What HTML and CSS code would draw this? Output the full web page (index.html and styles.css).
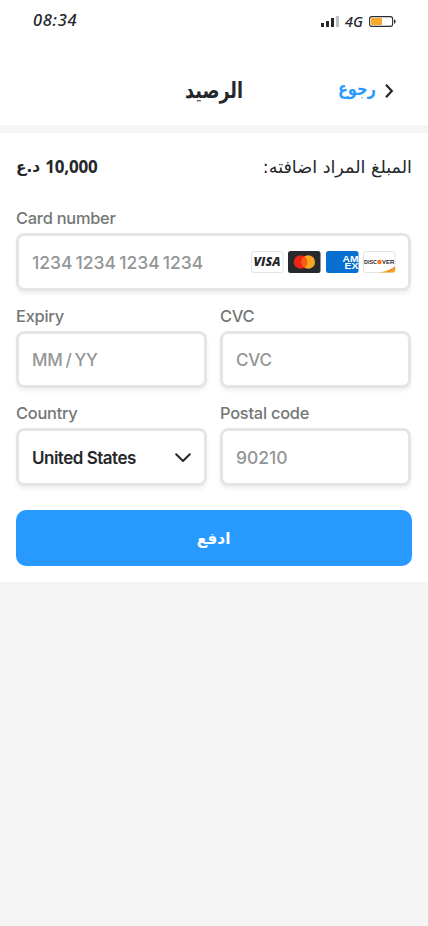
FILE: index.html
```html
<!DOCTYPE html>
<html lang="ar">
<head>
<meta charset="utf-8">
<meta name="viewport" content="width=device-width, initial-scale=1">
<title>الرصيد</title>
<link rel="stylesheet" href="styles.css">
</head>
<body>
<div class="status">
  <span class="time">08:34</span>
  <div class="indicators">
    <svg class="signal" width="18" height="11" viewBox="0 0 18 11"><path fill="#25272b" d="M0 7h3v4H0zM5 5h3v6H5zM10 2h3v9h-3z"/><path fill="#bfc2c5" d="M15 0h3v11h-3z"/></svg>
    <span class="network">4G</span>
    <svg class="battery" width="27" height="11" viewBox="0 0 27 11"><rect x=".6" y=".6" width="23" height="9.8" rx="2.2" fill="none" stroke="#292b2e" stroke-width="1.1"/><rect x="2" y="2" width="11" height="7" rx=".8" fill="#f8a927"/><path d="M25 3q3.4 2.5 0 5z" fill="#292b2e"/></svg>
  </div>
</div>
<header class="header">
  <h1 class="title" dir="rtl">الرصيد</h1>
  <a class="back"><span class="back-text" dir="rtl">رجوع</span><svg width="9" height="14" viewBox="0 0 9 14"><path d="M1 .8L6.8 7L1 13.2" fill="none" stroke="#242629" stroke-width="2.2"/></svg></a>
</header>
<main class="panel">
  <div class="amount">
    <div class="price"><span class="currency" dir="rtl">د.ع</span><strong class="value">10,000</strong></div>
    <span class="caption" dir="rtl">المبلغ المراد اضافته:</span>
  </div>
  <form class="form" lang="en">
    <div class="field wide">
      <span class="label">Card number</span>
      <div class="box"><span class="placeholder number">1234 1234 1234 1234</span>
        <div class="cards">
          <svg width="33" height="22" viewBox="0 0 33 22"><rect x=".5" y=".5" width="31.5" height="21" rx="2.5" fill="#fff" stroke="#e3e4e5"/><text class="visa" x="2.5" y="15.3" textLength="27" lengthAdjust="spacingAndGlyphs">VISA</text></svg>
          <svg width="33" height="22" viewBox="0 0 33 22"><rect width="32.5" height="22" rx="2.5" fill="#28292d"/><circle cx="12.5" cy="11" r="6.8" fill="#ef2518"/><circle cx="20.3" cy="11" r="6.8" fill="#f8a620"/><path d="M16.4 5.4a6.8 6.8 0 0 1 0 11.2a6.8 6.8 0 0 1 0-11.2" fill="#fa5b12"/></svg>
          <svg width="33" height="22" viewBox="0 0 33 22"><rect width="32.5" height="22" rx="2.5" fill="#0870d1"/><g class="amex"><text x="16.6" y="10.8" textLength="15.9" lengthAdjust="spacingAndGlyphs">AM</text><text x="18.6" y="18.4" textLength="13.9" lengthAdjust="spacingAndGlyphs">EX</text></g></svg>
          <svg width="33" height="22" viewBox="0 0 33 22"><rect x=".5" y=".5" width="31.5" height="21" rx="2.5" fill="#fff" stroke="#e3e4e5"/><path d="M32 15.5v4q0 2-2 2H16q10-1.5 16-6z" fill="#f8a620"/><path d="M25 20.5l7-4" stroke="#ee5a25" stroke-width="1" stroke-dasharray="2 1"/><text class="discover" x="1" y="13" textLength="13" lengthAdjust="spacingAndGlyphs">DISC</text><circle cx="16.4" cy="11" r="2.3" fill="#f47a20"/><text class="discover" x="19" y="13" textLength="12.2" lengthAdjust="spacingAndGlyphs">VER</text></svg>
        </div>
      </div>
    </div>
    <div class="field"><span class="label">Expiry</span><div class="box"><span class="placeholder">MM / YY</span></div></div>
    <div class="field"><span class="label">CVC</span><div class="box"><span class="placeholder">CVC</span></div></div>
    <div class="field"><span class="label">Country</span><div class="box"><span class="selected">United States</span><svg class="chevron" width="16" height="10" viewBox="0 0 16 10"><path d="M1.2 1.2L8 8l6.8-6.8" fill="none" stroke="#28292c" stroke-width="2" stroke-linecap="round" stroke-linejoin="round"/></svg></div></div>
    <div class="field"><span class="label">Postal code</span><div class="box"><span class="placeholder number">90210</span></div></div>
  </form>
  <button class="pay" dir="rtl"><span class="pay-text">ادفع</span></button>
</main>
</body>
</html>
```
FILE: styles.css
```css
* { box-sizing: border-box; }
body { margin: 0; min-height: 926px; background: #f5f5f5; color: #25272b; font-family: Inter, "DejaVu Sans", sans-serif; }
svg { display: block; flex: none; }
.status { height: 56px; padding: 10px 32px 0 33px; display: flex; align-items: flex-start; justify-content: space-between; background: #fff; }
.time, .network { font-family: "Noto Sans", sans-serif; font-style: italic; font-weight: 500; white-space: nowrap; }
.time { font-size: 16.5px; line-height: 20px; letter-spacing: .7px; }
.indicators { display: flex; align-items: center; height: 22px; }
.network { font-size: 14.5px; line-height: 20px; margin-left: 6px; width: 24px; }
.signal { margin-top: 1px; }
.header { height: 77px; padding: 0 34px; display: grid; grid-template-columns: 1fr 116px 1fr; align-items: center; background: #fff; border-bottom: 8px solid #f5f5f5; }
.title { grid-column: 2; margin: 0; text-align: center; font: bold 22px/30px "DejaVu Sans", sans-serif; transform: scaleX(.8); }
.back { display: flex; align-items: center; justify-content: flex-end; gap: 9px; color: #2a9aff; }
.back-text { font: bold 18px/26px "DejaVu Sans", sans-serif; transform: translateY(-2px) scaleX(.81); transform-origin: right; }
.panel { height: 449px; padding: 18px 16px 16px; background: #fff; }
.amount { height: 32px; display: flex; justify-content: space-between; align-items: center; white-space: nowrap; }
.price { display: flex; align-items: center; gap: 4px; }
.currency { font: bold 16px/28px "DejaVu Sans", sans-serif; transform: scaleX(.96); transform-origin: left; }
.value { font: 700 17px/28px "Open Sans", sans-serif; letter-spacing: -.2px; }
.caption { font: 17.6px/28px "DejaVu Sans", sans-serif; }
.form { margin: 23px 1px 0 0; display: grid; grid-template-columns: 1fr 1fr; column-gap: 13px; row-gap: 13px; }
.wide { grid-column: 1 / -1; }
.label { display: block; height: 27px; padding-top: 1px; font-size: 16.4px; line-height: 23px; font-weight: 500; letter-spacing: -.24px; color: #747776; }
.box { height: 57.5px; display: flex; align-items: center; justify-content: space-between; padding: 1px 12px 0 13px; border: 3px solid #e4e6e6; border-radius: 8px; background: #fff; box-shadow: 0 3px 4px rgba(0,0,0,.06); }
.placeholder, .selected { font-size: 17px; font-weight: 500; letter-spacing: -.25px; word-spacing: -1.3px; color: #929695; white-space: nowrap; }
.number { font-size: 17.5px; letter-spacing: 0; word-spacing: -1.6px; }
.selected { padding-top: 1px; color: #25272b; font-weight: 600; letter-spacing: -.5px; word-spacing: 0; }
.chevron { transform: translate(-1px, 1px); }
.cards { display: flex; gap: 4.5px; }
.visa { font: italic 800 12px "Open Sans", sans-serif; fill: #292a2e; }
.amex { font: bold 9px/1 "Liberation Sans", sans-serif; fill: #fff; }
.discover { font: bold 5.5px "Liberation Sans", sans-serif; fill: #292a2e; }
.pay { display: flex; align-items: center; justify-content: center; width: 100%; height: 56px; margin-top: 24px; padding: 2px 0 0; border: 0; border-radius: 10px; background: #2899ff; color: #fff; font: bold 16px/26px "DejaVu Sans", sans-serif; }
.pay-text { transform: scaleX(.96); }
```
